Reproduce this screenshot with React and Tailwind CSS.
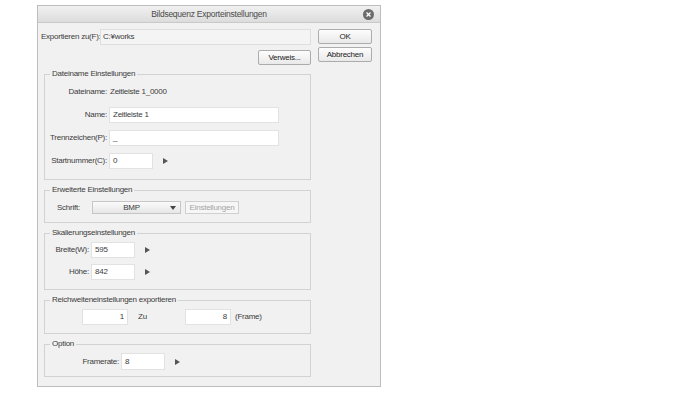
import React from "react";

const Arrow = () => (
  <svg width="5" height="6" viewBox="0 0 5 6" className="ml-[10px]">
    <path d="M0 0 L5 3 L0 6 Z" fill="#555" />
  </svg>
);

const Input = ({ value, className = "", align = "left" }) => (
  <div
    className={`h-[16px] bg-white border border-[#e2e2e2] flex items-center px-[3px] ${
      align === "right" ? "justify-end" : ""
    } ${className}`}
  >
    {value}
  </div>
);

const Button = ({ children, className = "" }) => (
  <div
    className={`h-[15px] flex items-center justify-center border border-[#acacac] rounded-[2px] bg-gradient-to-b from-[#fdfdfd] to-[#e9e9e9] text-[#222] ${className}`}
  >
    {children}
  </div>
);

const Label = ({ children, className = "" }) => (
  <span className={`flex justify-end shrink-0 ${className}`}>
    <span className="shrink-0">{children}</span>
  </span>
);

const Group = ({ title, children, className = "" }) => (
  <fieldset className={`ml-[3px] border border-[#d2d2d2] min-w-0 ${className}`}>
    <legend className="ml-[5px] px-[2px] leading-[10px]">{title}</legend>
    {children}
  </fieldset>
);

export default function App() {
  return (
    <div
      className="w-[697px] h-[393px] bg-white pt-[5px] pl-[37px] text-[8px] leading-[10px] tracking-[-0.25px] whitespace-nowrap text-[#3c3c3c]"
      style={{ fontFamily: '"Liberation Sans", Arial, sans-serif' }}
    >
      <div className="w-[344px] h-[382px] border border-[#bdbdbd] bg-[#f1f1f1] flex flex-col">
        {/* Title bar */}
        <div className="h-[17px] flex items-center justify-center relative bg-gradient-to-b from-[#f1f1f1] to-[#dcdcdc] border-b border-[#c9c9c9] text-[8.5px] text-[#4a4a4a]">
          Bildsequenz Exporteinstellungen
          <div className="absolute right-[6px] top-[3px] w-[11px] h-[11px] rounded-full bg-[#6b6b6b] flex items-center justify-center">
            <svg width="5" height="5" viewBox="0 0 5 5">
              <path d="M0.5 0.5 L4.5 4.5 M4.5 0.5 L0.5 4.5" stroke="#fff" strokeWidth="1.3" />
            </svg>
          </div>
        </div>

        {/* Body */}
        <div className="flex pt-[6px] pl-[3px]">
          {/* Left column */}
          <div className="w-[270px] flex flex-col">
            <div className="flex items-center h-[16px]">
              <span className="w-[59px]">Exportieren zu(F):</span>
              <div className="flex-1 h-[16px] bg-[#f4f4f4] border border-[#dedede] flex items-center px-[2px]">
                C:¥works
              </div>
            </div>
            <div className="flex justify-end mt-[5px]">
              <Button className="w-[53px]">Verweis...</Button>
            </div>

            <Group title="Dateiname Einstellungen" className="mt-[4px] pb-[10px]">
              <div className="flex items-center h-[14px] mt-[6px]">
                <Label className="w-[62px]">Dateiname:</Label>
                <span className="ml-[3px]">Zeitleiste 1_0000</span>
              </div>
              <div className="flex items-center mt-[8px]">
                <Label className="w-[62px]">Name:</Label>
                <Input value="Zeitleiste 1" className="ml-[2px] w-[170px]" />
              </div>
              <div className="flex items-center mt-[7px]">
                <Label className="w-[62px]">Trennzeichen(P):</Label>
                <Input value="_" className="ml-[2px] w-[170px]" />
              </div>
              <div className="flex items-center mt-[7px]">
                <Label className="w-[62px]">Startnummer(C):</Label>
                <Input value="0" className="ml-[2px] w-[44px]" />
                <Arrow />
              </div>
            </Group>

            <Group title="Erweiterte Einstellungen" className="mt-[5px] pb-[8px]">
              <div className="flex items-center mt-[6px]">
                <span className="ml-[12px] w-[35px]">Schrift:</span>
                <div className="w-[89px] h-[13px] border border-[#c6c6c6] bg-gradient-to-b from-[#fbfbfb] to-[#e6e6e6] flex items-center">
                  <span className="flex-1 text-center">BMP</span>
                  <svg width="6" height="4" viewBox="0 0 6 4" className="mr-[4px]">
                    <path d="M0 0 L6 0 L3 4 Z" fill="#444" />
                  </svg>
                </div>
                <div className="ml-[4px] w-[54px] h-[13px] border border-[#d0d0d0] bg-[#f6f6f6] text-[#a5a5a5] flex items-center justify-center">
                  Einstellungen
                </div>
              </div>
            </Group>

            <Group title="Skalierungseinstellungen" className="mt-[5px] pb-[9px]">
              <div className="flex items-center mt-[4px]">
                <Label className="w-[44px]">Breite(W):</Label>
                <Input value="595" className="ml-[2px] w-[44px]" />
                <Arrow />
              </div>
              <div className="flex items-center mt-[6px]">
                <Label className="w-[44px]">Höhe:</Label>
                <Input value="842" className="ml-[2px] w-[44px]" />
                <Arrow />
              </div>
            </Group>

            <Group title="Reichweiteneinstellungen exportieren" className="mt-[5px] pb-[8px]">
              <div className="flex items-center mt-[4px]">
                <Input value="1" align="right" className="ml-[37px] w-[46px]" />
                <span className="w-[57px] pl-[10px]">Zu</span>
                <Input value="8" align="right" className="w-[46px]" />
                <span className="ml-[4px]">(Frame)</span>
              </div>
            </Group>

            <Group title="Option" className="mt-[5px] pb-[6px]">
              <div className="flex items-center mt-[4px]">
                <Label className="w-[74px]">Framerate:</Label>
                <Input value="8" className="ml-[2px] w-[44px] h-[17px]" />
                <Arrow />
              </div>
            </Group>
          </div>

          {/* Right column */}
          <div className="ml-[7px] w-[54px] flex flex-col gap-[3px]">
            <Button>OK</Button>
            <Button>Abbrechen</Button>
          </div>
        </div>
      </div>
    </div>
  );
}
